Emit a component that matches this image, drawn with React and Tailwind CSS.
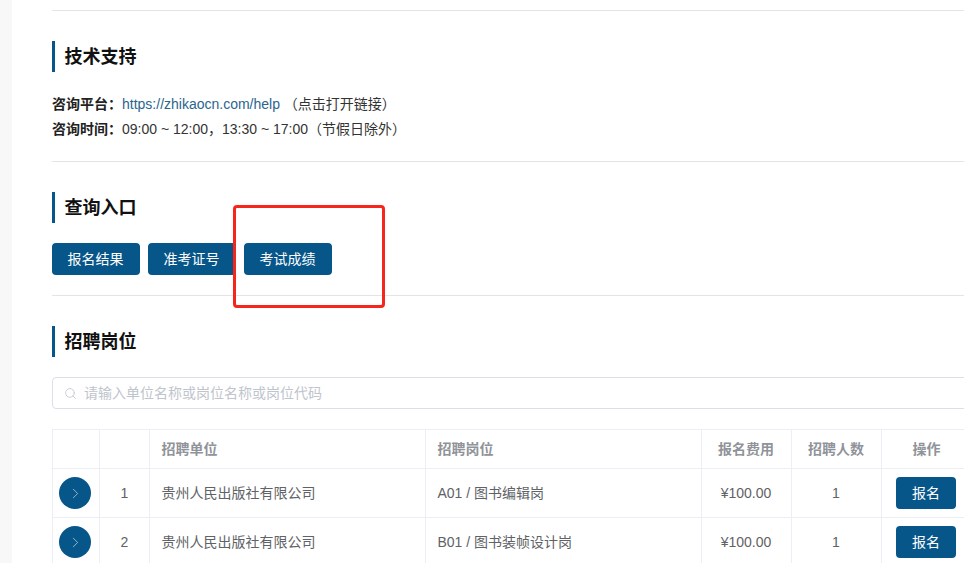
import React from 'react';
import { ChevronRight, Search } from 'lucide-react';

const font = 'font-["Liberation_Sans","Noto_Sans_CJK_SC",sans-serif]';

const rows = [
    { id: 1, unit: '贵州人民出版社有限公司', job: 'A01 / 图书编辑岗', fee: '¥100.00', count: 1 },
    { id: 2, unit: '贵州人民出版社有限公司', job: 'B01 / 图书装帧设计岗', fee: '¥100.00', count: 1 },
];

const SectionTitle = ({ children }) => (
    <h3 className="h-[31px] border-l-[3px] border-[#07568a] pl-[9.5px] text-[18px] leading-[33px] font-bold text-[#111]">
        {children}
    </h3>
);

const QueryButton = ({ children }) => (
    <button className="h-8 w-[88px] rounded-[4px] bg-[#07568a] pr-[1px] text-[14px] text-white">{children}</button>
);

export default function App() {
    return (
        <div className={`relative flex h-[563px] w-[964px] overflow-hidden bg-white ${font}`}>
            <div className="w-3 shrink-0 bg-[#f8f8f8]" />

            <div className="w-[1000px] shrink-0 pl-10">
                <div className="h-[11px] border-b border-[#e4e4e4]" />

                <section className="border-b border-[#e4e4e4] pt-[30px] pb-[19px]">
                    <SectionTitle>技术支持</SectionTitle>
                    <div className="mt-5 text-[14px] leading-[25px] text-[#333]">
                        <p>
                            <b className="inline-block w-[70px] text-[#222]">咨询平台：</b>
                            <span className="text-[#2a658e]">https://zhikaocn.com/help</span>
                            <span> （点击打开链接）</span>
                        </p>
                        <p>
                            <b className="inline-block w-[70px] text-[#222]">咨询时间：</b>
                            09:00 ~ 12:00，13:30 ~ 17:00（节假日除外）
                        </p>
                    </div>
                </section>

                <section className="border-b border-[#e4e4e4] pt-[30px] pb-5">
                    <SectionTitle>查询入口</SectionTitle>
                    <div className="mt-5 flex gap-2">
                        <QueryButton>报名结果</QueryButton>
                        <QueryButton>准考证号</QueryButton>
                        <QueryButton>考试成绩</QueryButton>
                    </div>
                </section>

                <section className="pt-[30px]">
                    <SectionTitle>招聘岗位</SectionTitle>

                    <div className="mt-5 flex h-8 items-center gap-[7px] rounded-[4px] border border-[#dcdfe6] pl-[11px]">
                        <Search size={13} strokeWidth={1.5} className="text-[#c0c4cc]" />
                        <span className="text-[14px] text-[#c0c4cc]">请输入单位名称或岗位名称或岗位代码</span>
                    </div>

                    <table className="mt-5 w-[920px] table-fixed border-collapse text-[14px] text-[#606266]">
                        <colgroup>
                            <col className="w-[47px]" />
                            <col className="w-[50px]" />
                            <col className="w-[276px]" />
                            <col className="w-[276px]" />
                            <col className="w-[90px]" />
                            <col className="w-[90px]" />
                            <col className="w-[91px]" />
                        </colgroup>
                        <thead>
                            <tr className="h-[39px] text-[#909399]">
                                <th className="border border-[#ebeef5]" />
                                <th className="border border-[#ebeef5]" />
                                <th className="border border-[#ebeef5] pl-[11.5px] text-left font-bold">招聘单位</th>
                                <th className="border border-[#ebeef5] pl-[11.5px] text-left font-bold">招聘岗位</th>
                                <th className="border border-[#ebeef5] pr-[1px] font-bold">报名费用</th>
                                <th className="border border-[#ebeef5] pr-[1px] font-bold">招聘人数</th>
                                <th className="border border-[#ebeef5] pr-[1px] font-bold">操作</th>
                            </tr>
                        </thead>
                        <tbody>
                            {rows.map((row) => (
                                <tr key={row.id} className="h-[49px]">
                                    <td className="border border-[#ebeef5] pr-[2px]">
                                        <div className="mx-auto flex size-8 items-center justify-center rounded-full bg-[#07568a]">
                                            <ChevronRight size={17} strokeWidth={1} className="text-[#c9dbe7]" />
                                        </div>
                                    </td>
                                    <td className="border border-[#ebeef5] text-center">{row.id}</td>
                                    <td className="border border-[#ebeef5] pl-[11.5px]">{row.unit}</td>
                                    <td className="border border-[#ebeef5] pl-[11.5px]">{row.job}</td>
                                    <td className="border border-[#ebeef5] pr-[1px] text-center">{row.fee}</td>
                                    <td className="border border-[#ebeef5] pr-[1px] text-center">{row.count}</td>
                                    <td className="border border-[#ebeef5] pr-[2px] text-center">
                                        <button className="h-8 w-[60px] rounded-[4px] bg-[#07568a] text-[14px] text-white">报名</button>
                                    </td>
                                </tr>
                            ))}
                        </tbody>
                    </table>
                </section>
            </div>

            {/* red annotation drawn over the screenshot */}
            <div className="absolute top-[205px] left-[233px] h-[103px] w-[152px] rounded-[4px] border-[3px] border-[#f7261c]" />
        </div>
    );
}
